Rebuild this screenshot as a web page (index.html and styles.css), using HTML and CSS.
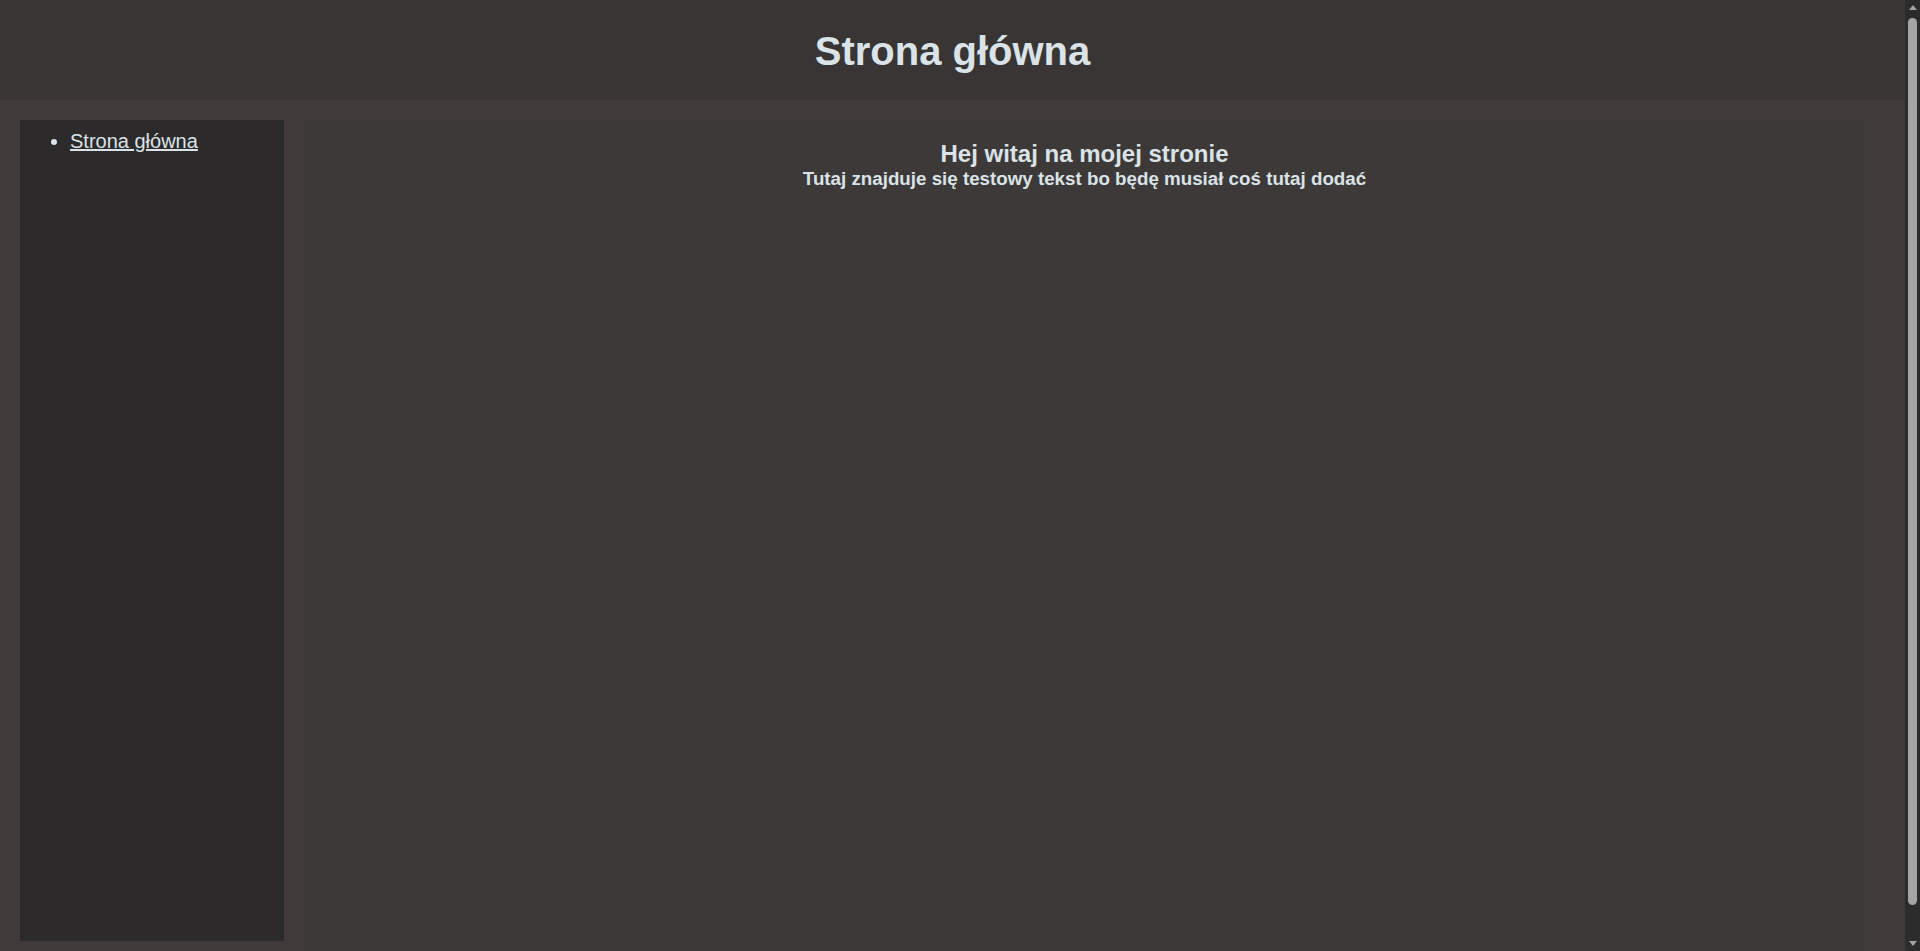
FILE: index.html
```html
<!DOCTYPE html>
<html lang="pl">
<head>
<meta charset="utf-8">
<title>Strona główna</title>
<link rel="stylesheet" href="styles.css">
</head>
<body>
<div class="app">
  <div class="page">
    <header class="top">
      <h1 class="title">Strona główna</h1>
    </header>
    <div class="layout">
      <nav class="sidebar">
        <ul class="menu">
          <li><a href="#" class="menu-link">Strona główna</a></li>
        </ul>
      </nav>
      <main class="content">
        <h3 class="welcome">Hej witaj na mojej stronie</h3>
        <h4 class="lead">Tutaj znajduje się testowy tekst bo będę musiał coś tutaj dodać</h4>
      </main>
    </div>
  </div>
  <div class="scrollbar">
    <div class="arrow up"></div>
    <div class="track"><div class="thumb"></div></div>
    <div class="arrow down"></div>
  </div>
</div>
</body>
</html>
```

FILE: styles.css
```css
html, body {
  margin: 0;
  padding: 0;
  height: 951px;
  overflow: hidden;
}
body {
  font-family: "Liberation Sans", Arial, sans-serif;
  color: #dae3e7;
  background: #403b3a;
}
.app {
  display: flex;
  height: 951px;
}
.page {
  flex: 1;
  min-width: 0;
  overflow: hidden;
  background: #403b3a;
}
.top {
  height: 100px;
  background: #393534;
  display: flex;
  align-items: center;
  justify-content: center;
}
.title {
  margin: 0;
  padding-top: 1px;
  font-size: 40px;
  font-weight: bold;
  line-height: 46px;
  color: #dae3e7;
}
.layout {
  display: flex;
  align-items: flex-start;
  gap: 20px;
  padding: 20px 40px 20px 20px;
}
.sidebar {
  width: 264px;
  height: 821px;
  flex: none;
  background: #2c2a2b;
  padding-top: 10px;
  box-sizing: border-box;
}
.menu {
  margin: 0;
  padding-left: 50px;
  font-size: 20px;
  line-height: 23px;
}
.menu-link {
  color: #dae3e7;
  text-decoration: underline;
}
.content {
  flex: 1;
  height: 845px;
  background: #3d3938;
  padding-top: 20px;
  box-sizing: border-box;
  text-align: center;
}
.welcome {
  margin: 0;
  font-size: 24px;
  line-height: 27.6px;
  font-weight: bold;
}
.lead {
  margin: 0;
  font-size: 18.75px;
  line-height: 21.5px;
  font-weight: bold;
}
.scrollbar {
  width: 15px;
  flex: none;
  background: #2c2c2c;
  display: flex;
  flex-direction: column;
  align-items: center;
}
.arrow {
  width: 0;
  height: 0;
  border-left: 4px solid transparent;
  border-right: 4px solid transparent;
  flex: none;
}
.arrow.up {
  margin-top: 5px;
  border-bottom: 5px solid #a3a3a3;
}
.arrow.down {
  margin-bottom: 5px;
  border-top: 5px solid #a3a3a3;
}
.track {
  flex: 1;
  width: 100%;
  display: flex;
  justify-content: center;
  padding: 8px 0 0;
}
.thumb {
  width: 9px;
  height: 887px;
  background: #a5a5a5;
  border-radius: 5px;
}
```
